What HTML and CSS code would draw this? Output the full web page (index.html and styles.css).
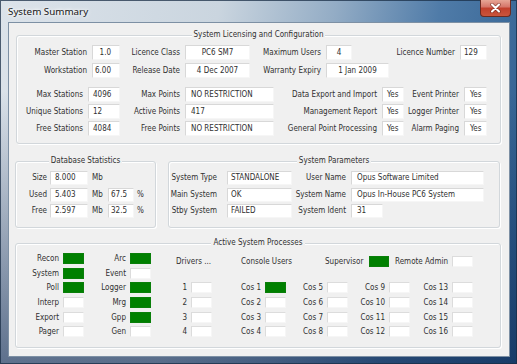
FILE: index.html
```html
<!DOCTYPE html>
<html>
<head>
<meta charset="utf-8">
<title>System Summary</title>
<link rel="stylesheet" href="styles.css">
</head>
<body>
<div class="window">
  <div class="titlebar">
    <span class="title">System Summary</span>
    <span class="close">
      <svg width="11" height="10" viewBox="0 0 11 10">
        <path d="M2 1.5 L9 8.5 M9 1.5 L2 8.5" stroke="#5a1c12" stroke-width="3.6" stroke-linecap="round" opacity="0.55"/>
        <path d="M2 1.5 L9 8.5 M9 1.5 L2 8.5" stroke="#ffffff" stroke-width="2.1" stroke-linecap="round"/>
      </svg>
    </span>
  </div>
  <div class="client">
    <section class="group g-lic">
      <div class="gtitle">System Licensing and Configuration</div>
      <div class="lic-a">
        <span class="lbl">Master Station</span><span class="fld ra">1.0</span>
        <span class="lbl">Licence Class</span><span class="fld ca">PC6 SM7</span>
        <span class="lbl">Maximum Users</span><span class="fld ca">4</span>
        <span class="lbl">Licence Number</span><span class="fld p3">129</span>
        <span class="lbl">Workstation</span><span class="fld ra">6.00</span>
        <span class="lbl">Release Date</span><span class="fld ca">4 Dec 2007</span>
        <span class="lbl">Warranty Expiry</span><span class="fld ca wide">1 Jan 2009</span>
      </div>
      <div class="lic-b">
        <span class="lbl">Max Stations</span><span class="fld">4096</span>
        <span class="lbl">Max Points</span><span class="fld p5">NO RESTRICTION</span>
        <span class="lbl">Data Export and Import</span><span class="fld">Yes</span>
        <span class="lbl">Event Printer</span><span class="fld p5">Yes</span>
        <span class="lbl">Unique Stations</span><span class="fld">12</span>
        <span class="lbl">Active Points</span><span class="fld p5">417</span>
        <span class="lbl">Management Report</span><span class="fld">Yes</span>
        <span class="lbl">Logger Printer</span><span class="fld p5">Yes</span>
        <span class="lbl">Free Stations</span><span class="fld">4084</span>
        <span class="lbl">Free Points</span><span class="fld p5">NO RESTRICTION</span>
        <span class="lbl">General Point Processing</span><span class="fld">Yes</span>
        <span class="lbl">Alarm Paging</span><span class="fld p5">Yes</span>
      </div>
    </section>

    <div class="row2">
      <section class="group g-db">
        <div class="gtitle">Database Statistics</div>
        <div class="db-grid">
          <span class="lbl">Size</span><span class="fld">8.000</span><span class="unit">Mb</span><span></span><span></span>
          <span class="lbl">Used</span><span class="fld">5.403</span><span class="unit">Mb</span><span class="fld p2">67.5</span><span class="unit pc">%</span>
          <span class="lbl">Free</span><span class="fld">2.597</span><span class="unit">Mb</span><span class="fld p2">32.5</span><span class="unit pc">%</span>
        </div>
      </section>
      <section class="group g-sys">
        <div class="gtitle">System Parameters</div>
        <div class="sys-grid">
          <span class="lbl l10">System Type</span><span class="fld p3">STANDALONE</span>
          <span class="lbl">User Name</span><span class="fld p5">Opus Software Limited</span>
          <span class="lbl l10">Main System</span><span class="fld p3">OK</span>
          <span class="lbl">System Name</span><span class="fld p5">Opus In-House PC6 System</span>
          <span class="lbl l10">Stby System</span><span class="fld p3">FAILED</span>
          <span class="lbl">System Ident</span><span class="fld p5 ident">31</span>
        </div>
      </section>
    </div>

    <section class="group g-proc">
      <div class="gtitle">Active System Processes</div>
      <div class="proc-grid">
        <span class="lbl">Recon</span><span class="led on"></span>
        <span class="lbl">Arc</span><span class="led on"></span>
        <div class="proc-head">
          <span class="hd"></span>
          <span class="hd">Drivers ...</span>
          <span class="hd">Console Users</span>
          <span class="hd">Supervisor</span>
          <span class="led on"></span>
          <span class="lbl">Remote Admin</span>
          <span class="led"></span>
        </div>

        <span class="lbl">System</span><span class="led on"></span>
        <span class="lbl">Event</span><span class="led"></span>
        <span class="spacer"></span>

        <span class="lbl">Poll</span><span class="led on"></span>
        <span class="lbl">Logger</span><span class="led on"></span>
        <span class="lbl">1</span><span class="led"></span>
        <span class="lbl">Cos 1</span><span class="led on"></span>
        <span class="lbl">Cos 5</span><span class="led"></span>
        <span class="lbl">Cos 9</span><span class="led"></span>
        <span class="lbl">Cos 13</span><span class="led"></span>

        <span class="lbl">Interp</span><span class="led"></span>
        <span class="lbl">Mrg</span><span class="led on"></span>
        <span class="lbl">2</span><span class="led"></span>
        <span class="lbl">Cos 2</span><span class="led"></span>
        <span class="lbl">Cos 6</span><span class="led"></span>
        <span class="lbl">Cos 10</span><span class="led"></span>
        <span class="lbl">Cos 14</span><span class="led"></span>

        <span class="lbl">Export</span><span class="led"></span>
        <span class="lbl">Gpp</span><span class="led on"></span>
        <span class="lbl">3</span><span class="led"></span>
        <span class="lbl">Cos 3</span><span class="led"></span>
        <span class="lbl">Cos 7</span><span class="led"></span>
        <span class="lbl">Cos 11</span><span class="led"></span>
        <span class="lbl">Cos 15</span><span class="led"></span>

        <span class="lbl">Pager</span><span class="led"></span>
        <span class="lbl">Gen</span><span class="led"></span>
        <span class="lbl">4</span><span class="led"></span>
        <span class="lbl">Cos 4</span><span class="led"></span>
        <span class="lbl">Cos 8</span><span class="led"></span>
        <span class="lbl">Cos 12</span><span class="led"></span>
        <span class="lbl">Cos 16</span><span class="led"></span>
      </div>
    </section>
  </div>
</div>
</body>
</html>
```

FILE: styles.css
```css
* {
  box-sizing: border-box;
  margin: 0;
  padding: 0;
}

html, body {
  width: 517px;
  height: 364px;
  overflow: hidden;
}

body {
  font-family: "DejaVu Sans Condensed", "DejaVu Sans", sans-serif;
  font-stretch: condensed;
  font-size: 8px;
  color: #303030;
}

.window {
  width: 517px;
  height: 364px;
  display: flex;
  flex-direction: column;
  padding: 0 7px 7px 8px;
  background:
    linear-gradient(to bottom, rgba(255,255,255,0) 25%, rgba(12,38,80,0.6) 100%),
    linear-gradient(100deg, #dce3ea 0%, #cad5df 38%, #93acc5 58%, #4f7ba8 76%, #2b5b8c 100%);
  box-shadow: inset 0 0 0 1px rgba(25,45,70,0.75);
}

.titlebar {
  height: 22px;
  display: flex;
  align-items: flex-start;
}

.title {
  margin-top: 5px;
  line-height: 13px;
  font-family: "Noto Sans", sans-serif;
  font-size: 9.8px;
  color: #151515;
  text-shadow: 0 0 5px #fff, 0 0 3px #fff;
}

.close {
  margin-left: auto;
  margin-right: -1px;
  width: 31px;
  height: 17px;
  border: 1px solid #6b2a20;
  border-top: none;
  border-radius: 0 0 4px 4px;
  background: linear-gradient(#e7a696 0%, #d6776a 42%, #c2402c 52%, #c9553c 100%);
  display: flex;
  align-items: center;
  justify-content: center;
}

.client {
  flex: 1;
  background: #f0f0f0;
  border: 1px solid #7d90a4;
  padding-top: 12px;
}

.group {
  border: 1px solid #d2d7db;
  border-radius: 3px;
  box-shadow: inset 1px 1px 0 #fff, 1px 1px 0 #fff;
}

.gtitle {
  display: table;
  margin: -7px auto 0;
  padding: 0 2px;
  line-height: 12px;
  background: #f0f0f0;
}

.lbl {
  text-align: right;
  padding-right: 5px;
  white-space: nowrap;
}

.fld {
  background: #fff;
  border: 1px solid;
  border-color: #d8d8d8 #f6f6f6 #f6f6f6 #d8d8d8;
  padding: 0 0 0 4px;
  white-space: nowrap;
  overflow: hidden;
}

.fld.ra { text-align: right; padding: 0 8px 0 0; }
.fld.ca { text-align: center; padding: 0; }
.fld.p2 { padding-left: 2px; }
.fld.p3 { padding-left: 3px; }
.fld.p5 { padding-left: 5px; }
.fld.wide { width: 63px; }

/* Licensing group */
.g-lic {
  margin-left: 7px;
  width: 485px;
  padding-bottom: 7px;
}

.lic-a {
  margin-top: 4px;
  display: grid;
  grid-template-columns: 75px 28px 65px 65px 76px 26px 108px 27px;
  grid-template-rows: 15px 15px;
  row-gap: 3px;
  line-height: 13px;
}

.lic-a .lbl,
.lic-b .lbl { line-height: 15px; }

.lic-b {
  margin-top: 9px;
  display: grid;
  grid-template-columns: 71px 32px 65px 89px 108px 22px 60px 23px;
  grid-template-rows: 15px 15px 15px;
  row-gap: 2px;
  line-height: 13px;
}

/* Second row */
.row2 {
  margin-top: 17px;
  margin-left: 6px;
  display: flex;
  gap: 12px;
}

.g-db {
  width: 141px;
  padding-bottom: 9px;
}

.g-sys {
  width: 332px;
  padding-bottom: 9px;
}

.db-grid {
  margin-top: 4px;
  display: grid;
  grid-template-columns: 34px 38px 20px 26px 18px;
  grid-template-rows: 14px 14px 14px;
  row-gap: 2.5px;
  line-height: 12px;
}

.db-grid .lbl { padding-right: 3px; line-height: 14px; }

.unit {
  padding-left: 4px;
  line-height: 14px;
}

.unit.pc { padding-left: 3px; }

.sys-grid {
  margin-top: 4px;
  display: grid;
  grid-template-columns: 58px 65px 59px 133px;
  grid-template-rows: 14px 14px 14px;
  row-gap: 2.5px;
  line-height: 12px;
}

.sys-grid .lbl { line-height: 14px; }
.sys-grid .lbl.l10 { padding-right: 10px; }
.fld.ident { width: 32px; }

/* Processes group */
.g-proc {
  margin-top: 15px;
  margin-left: 6px;
  width: 486px;
  padding-bottom: 9.5px;
}

.proc-grid {
  margin-top: 4px;
  display: grid;
  grid-template-columns: 47px 21px 46px 21px 40px 21px 53px 21px 41px 21px 41px 21px 42px 21px;
  grid-template-rows: repeat(6, 11px);
  row-gap: 3.7px;
  line-height: 11px;
}

.proc-grid .lbl { padding-right: 4px; }

.proc-head {
  grid-column: 5 / 15;
  margin-top: 3px;
  height: 11px;
  display: grid;
  grid-template-columns: 25px 65px 84px 44px 20px 63px 21px;
}

.spacer { grid-column: 5 / 15; }

.hd { white-space: nowrap; }

.led {
  height: 11px;
  background: #fff;
  border: 1px solid;
  border-color: #dcdcdc #f6f6f6 #f6f6f6 #dcdcdc;
}

.led.on {
  background: #008000;
  border-color: #0a7f0a;
}
```
